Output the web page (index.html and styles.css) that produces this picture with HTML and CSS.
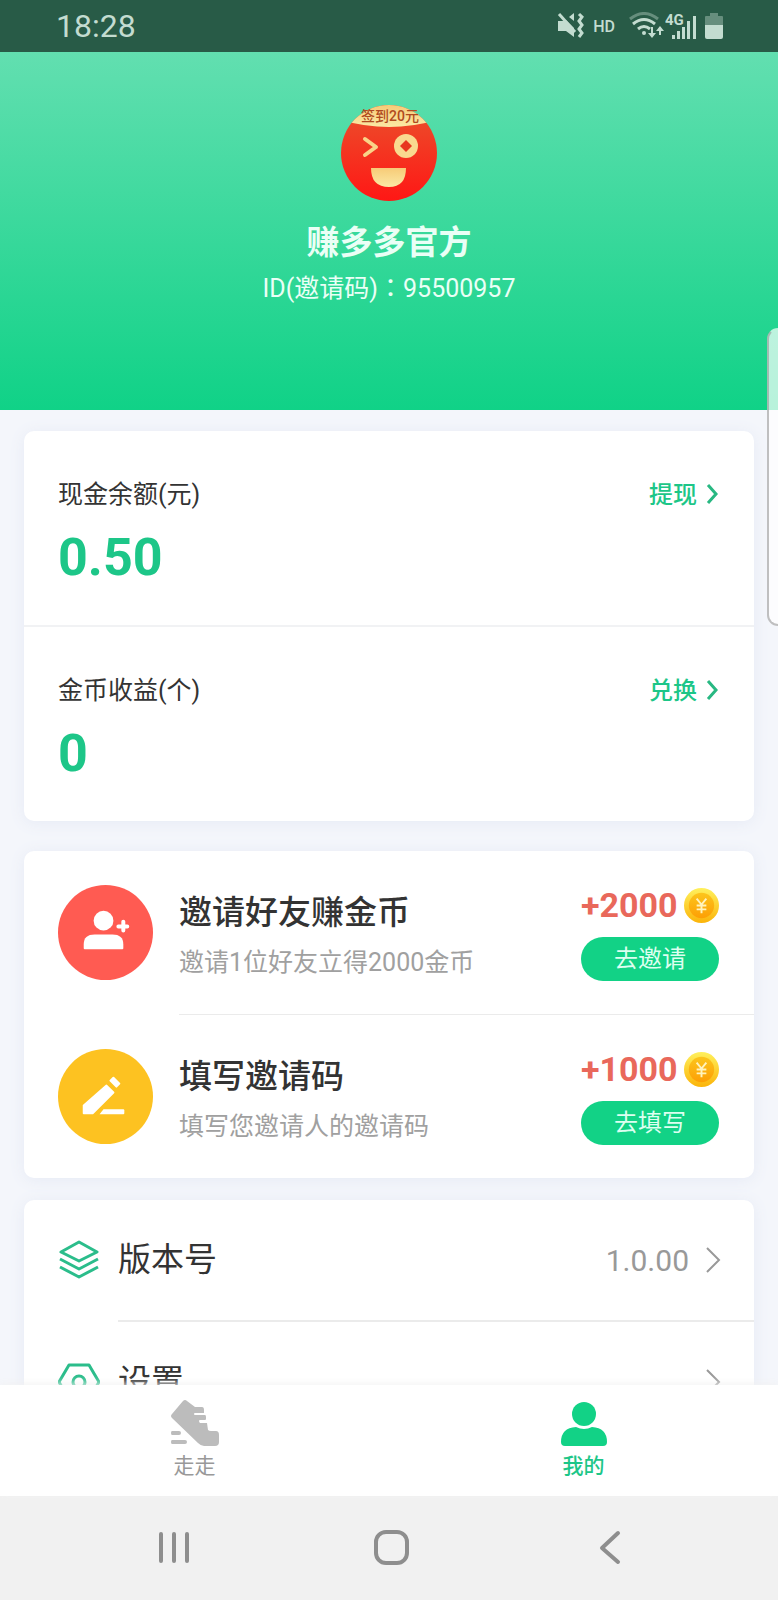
FILE: index.html
```html
<!DOCTYPE html>
<html lang="zh-CN">
<head>
<meta charset="utf-8">
<meta name="viewport" content="width=device-width, initial-scale=1">
<title>我的</title>
<link rel="stylesheet" href="styles.css">
</head>
<body>
<div class="screen">
  <div class="status">
    <span class="status-time">18:28</span>
    <div class="status-icons">
      <svg class="ic-mute" width="28" height="28" viewBox="0 0 28 28" fill="none" stroke="currentColor">
        <path d="M1 9h5l3-1 8 8v9l-8-6H1z" fill="currentColor" stroke="none"/>
        <path d="M12 5l5-4v8z" fill="currentColor" stroke="none"/>
        <path d="M2 2l16 18" stroke-width="3"/>
        <path d="M22 2l3 3-3 4 3 4-3 4 3 4-3 4" stroke-width="3"/>
      </svg>
      <span class="status-hd">HD</span>
      <svg class="ic-wifi" width="36" height="28" viewBox="0 0 36 28" fill="none" stroke="currentColor" stroke-width="3">
        <path d="M1 7q14-11 28 0" opacity=".4"/>
        <path d="M4 12q11-9 22 0M9 17q6-5 12 0"/>
        <circle cx="15" cy="21" r="2" fill="currentColor" stroke="none"/>
        <path d="M23 15v9M31 23v-8" stroke-width="2"/>
        <path d="M19 21h8l-4 5zM27 19h8l-4-5z" fill="currentColor" stroke="none"/>
      </svg>
      <svg class="ic-signal" width="32" height="28" viewBox="0 0 32 28" fill="currentColor">
        <text class="net" x="0" y="13">4G</text>
        <path d="M7 23h3v4H7zM12 19h3v8h-3zM17 15h3v12h-3zM22 9h3v18h-3zM28 4h3v23h-3z"/>
      </svg>
      <svg class="ic-battery" width="18" height="28" viewBox="0 0 18 28" fill="currentColor">
        <path d="M5 1h8v3h4q1 0 1 1v8H0V5q0-1 1-1h4z" opacity=".4"/>
        <path d="M0 13h18v12q0 2-2 2H2q-2 0-2-2z"/>
      </svg>
    </div>
  </div>

  <main class="content">
    <header class="profile">
      <svg class="avatar" viewBox="0 0 96 96" role="img" aria-label="签到20元">
        <defs>
          <linearGradient id="face" x2="0" y2="1"><stop offset="0" stop-color="#ea512c"/><stop offset="1" stop-color="#ff1715"/></linearGradient>
          <linearGradient id="gold" x2="0" y2="1"><stop offset="0" stop-color="#f7cb77"/><stop offset="1" stop-color="#fbe9a5"/></linearGradient>
          <clipPath id="round"><circle cx="48" cy="48" r="48"/></clipPath>
        </defs>
        <circle cx="48" cy="48" r="48" fill="url(#face)"/>
        <path d="M0 0h96v15q-48 14-96 0z" fill="url(#gold)" clip-path="url(#round)"/>
        <text class="avatar-text" x="49" y="16" text-anchor="middle">签到20元</text>
        <path d="M24 34l11 8-11 8" fill="none" stroke="#f9d488" stroke-width="4" stroke-linecap="round" stroke-linejoin="round"/>
        <circle cx="65" cy="41" r="12" fill="#f9d98f"/>
        <path d="M65 35l6 6-6 6-6-6z" fill="#e8371f"/>
        <path d="M30 63h35q0 19-17 19-18 0-18-19z" fill="url(#gold)"/>
      </svg>
      <h1 class="name">赚多多官方</h1>
      <p class="uid">ID(邀请码)<span class="colon" lang="zh-TW">：</span>95500957</p>
    </header>

    <section class="card wallet">
      <div class="balance">
        <div>
          <h2 class="label">现金余额(元)</h2>
          <p class="amount">0.50</p>
        </div>
        <a class="more" href="#withdraw">提现<svg width="14" height="24" viewBox="0 0 14 24"><path d="M3 2l8 9-8 9"/></svg></a>
      </div>
      <div class="balance">
        <div>
          <h2 class="label">金币收益(个)</h2>
          <p class="amount">0</p>
        </div>
        <a class="more" href="#exchange">兑换<svg width="14" height="24" viewBox="0 0 14 24"><path d="M3 2l8 9-8 9"/></svg></a>
      </div>
    </section>

    <section class="card tasks">
      <div class="task">
        <svg class="task-icon" viewBox="0 0 96 96">
          <circle cx="48" cy="48" r="48" fill="#ff5b52"/>
          <g fill="#fff"><circle cx="46" cy="36" r="10"/><path d="M26 64V60q0-10 11-10h18q11 0 11 10v4q0 1-1 1H27q-1 0-1-1z"/></g>
          <path d="M66 37v9M61 42h9" stroke="#fff" stroke-width="4" stroke-linecap="round"/>
        </svg>
        <div class="task-body">
          <div class="task-text">
            <h2 class="task-title">邀请好友赚金币</h2>
            <p class="task-note">邀请1位好友立得2000金币</p>
          </div>
          <div class="task-side">
            <p class="reward">+2000
              <svg class="coin" viewBox="0 0 36 36">
                <defs>
                  <linearGradient id="rim" x2="0" y2="1"><stop offset="0" stop-color="#fff05c"/><stop offset="1" stop-color="#fbb40a"/></linearGradient>
                  <linearGradient id="core" x2="0" y2="1"><stop offset="0" stop-color="#fcc51c"/><stop offset="1" stop-color="#fd9f05"/></linearGradient>
                </defs>
                <circle cx="18" cy="18" r="18" fill="url(#rim)"/><circle cx="18" cy="18" r="13" fill="url(#core)"/>
                <path d="M13 11l5 6 5-6M18 17v9M13 18h10M13 22h10" fill="none" stroke="#fff3bd" stroke-width="2"/>
              </svg>
            </p>
            <button class="go" type="button">去邀请</button>
          </div>
        </div>
      </div>
      <div class="task">
        <svg class="task-icon" viewBox="0 0 96 96">
          <circle cx="48" cy="48" r="48" fill="#fdc221"/>
          <path d="M49 37l7 7-21 21h-9v-8zM56 29l6 6-3 3-6-6z" fill="#fff" stroke="#fff" stroke-width="2" stroke-linejoin="round"/>
          <path d="M46 61h20q1 0 1 1v3q0 1-1 1H42z" fill="#fff"/>
        </svg>
        <div class="task-body">
          <div class="task-text">
            <h2 class="task-title">填写邀请码</h2>
            <p class="task-note">填写您邀请人的邀请码</p>
          </div>
          <div class="task-side">
            <p class="reward">+1000
              <svg class="coin" viewBox="0 0 36 36">
                <circle cx="18" cy="18" r="18" fill="url(#rim)"/><circle cx="18" cy="18" r="13" fill="url(#core)"/>
                <path d="M13 11l5 6 5-6M18 17v9M13 18h10M13 22h10" fill="none" stroke="#fff3bd" stroke-width="2"/>
              </svg>
            </p>
            <button class="go" type="button">去填写</button>
          </div>
        </div>
      </div>
    </section>

    <nav class="card menu">
      <a class="item" href="#version">
        <svg class="item-icon" viewBox="0 0 42 42"><path d="M21 3l18 10-18 9L3 13zM2 20l19 10 19-10M2 28l19 10 19-10"/></svg>
        <span class="item-body"><span class="item-name">版本号</span><span class="item-value">1.0.00</span><svg class="item-arrow" width="16" height="28" viewBox="0 0 16 28"><path d="M2 2l12 12L2 26"/></svg></span>
      </a>
      <a class="item" href="#settings">
        <svg class="item-icon" viewBox="0 0 42 42"><path d="M11 5h20l10 17-10 17H11L1 22z"/><circle cx="21" cy="22" r="6"/></svg>
        <span class="item-body"><span class="item-name">设置</span><svg class="item-arrow" width="16" height="28" viewBox="0 0 16 28"><path d="M2 2l12 12L2 26"/></svg></span>
      </a>
    </nav>
  </main>

  <nav class="tabs">
    <a class="tab" href="#walk">
      <svg width="50" height="48" viewBox="0 0 50 48" fill="currentColor">
        <path d="M13 2q2-2 4 0l8 6h7q2 0 2 3v3h-9q-1 0-1 1t1 1h10q1 0 1 2v2q0 1-1 1h-5q-1 0-1 1t1 2h7l1 7q1 1 3 1h5q3 0 3 4v7q0 4-4 4H34q-3 0-6-3L2 19q-2-2 0-4z"/>
        <path d="M2 32h7q2 0 2 2t-2 2H2q-1 0-1-2t1-2zM2 41h13q2 0 2 2t-2 2H2q-1 0-1-2t1-2z"/>
      </svg>
      <span>走走</span>
    </a>
    <a class="tab tab-active" href="#me" aria-current="page">
      <svg width="50" height="48" viewBox="0 0 50 48" fill="currentColor">
        <circle cx="25" cy="15" r="12"/>
        <path d="M17 28q8 4 16 0 15 1 15 15 0 4-4 4H6q-4 0-4-4 0-14 15-15z"/>
      </svg>
      <span>我的</span>
    </a>
  </nav>

  <div class="sysnav">
    <button class="key" type="button" aria-label="最近任务"><svg width="36" height="36" viewBox="0 0 36 36"><path d="M5 4v27M18 4v27M31 4v27"/></svg></button>
    <button class="key" type="button" aria-label="主屏幕"><svg width="36" height="36" viewBox="0 0 36 36"><rect x="2" y="2" width="31" height="31" rx="10"/></svg></button>
    <button class="key" type="button" aria-label="返回"><svg width="36" height="36" viewBox="0 0 36 36"><path d="M26 3L10 18l16 14"/></svg></button>
  </div>

  <div class="edge-panel"></div>
</div>
</body>
</html>
```
FILE: styles.css
```css
* {
  box-sizing: border-box;
}

body,
h1,
h2,
p {
  margin: 0;
}

body {
  font-family: Roboto, "Noto Sans CJK SC", sans-serif;
  color: #333;
  background: #f4f6fb;
}

a {
  color: inherit;
  text-decoration: none;
}

svg {
  display: block;
  flex: none;
}

.screen {
  position: relative;
  display: flex;
  flex-direction: column;
  height: 100vh;
  overflow: hidden;
}

/* Status bar */
.status {
  flex: none;
  display: flex;
  align-items: center;
  justify-content: space-between;
  height: 52px;
  padding: 0 55px 0 56px;
  background: #285b47;
  color: #c3dcd0;
}

.status-time {
  font-size: 32px;
  line-height: 52px;
}

.status-icons {
  display: flex;
  align-items: center;
}

.status-hd {
  margin: 0 14px 0 8px;
  font-size: 16px;
  font-weight: 500;
}

.ic-signal {
  margin-right: 8px;
}

.net {
  font-size: 15px;
  font-weight: 700;
}

.content {
  flex: 1;
  min-height: 0;
  overflow: hidden;
}

.profile {
  display: flex;
  flex-direction: column;
  align-items: center;
  padding: 53px 24px 102px;
  background: linear-gradient(#62dfb0, #10d287);
  color: #eafff6;
}

.avatar {
  width: 96px;
  height: 96px;
}

.avatar-text {
  font-size: 14px;
  font-weight: 500;
  fill: #b04a20;
}

.name {
  margin-top: 18px;
  font-size: 33px;
  font-weight: 700;
  line-height: 48px;
}

.uid {
  margin-top: 3px;
  font-size: 25px;
  line-height: 38px;
}

.colon {
  font-family: "Noto Sans CJK TC", sans-serif;
  line-height: 1;
}

.card {
  margin: 0 24px 30px;
  border-radius: 10px;
  background: #fff;
  box-shadow: 0 2px 16px #e6eaf5;
}

.wallet {
  margin-top: 21px;
}

.balance {
  display: flex;
  justify-content: space-between;
  align-items: flex-start;
  padding: 46px 35px 37px 34px;
}

.balance + .balance {
  border-top: 2px solid #f1f2f4;
}

.label {
  font-size: 25px;
  font-weight: 400;
  line-height: 36px;
}

.amount {
  margin-top: 15px;
  font-size: 52px;
  font-weight: 700;
  line-height: 60px;
  color: #1dc688;
}

.more {
  display: flex;
  align-items: center;
  gap: 8px;
  font-size: 24px;
  font-weight: 500;
  line-height: 36px;
  color: #1dc688;
}

.more path {
  fill: none;
  stroke: #28b882;
  stroke-width: 3;
}

/* Invite tasks */
.tasks {
  margin-bottom: 22px;
}

.task {
  display: flex;
  align-items: center;
  gap: 26px;
  padding-left: 34px;
}

.task-icon {
  width: 95px;
  height: 95px;
}

.task-body {
  flex: 1;
  display: flex;
  align-items: center;
  justify-content: space-between;
  padding: 34px 35px 33px 0;
}

.task + .task .task-body {
  border-top: 1px solid #ebebeb;
}

.task-text {
  padding-top: 4px;
}

.task-title {
  font-size: 33px;
  font-weight: 500;
  line-height: 48px;
}

.task-note {
  margin-top: 8px;
  font-size: 25px;
  line-height: 36px;
  color: #a0a0a0;
}

.task-side {
  display: flex;
  flex-direction: column;
  gap: 12px;
  width: 138px;
}

.reward {
  display: flex;
  align-items: center;
  justify-content: space-between;
  font-size: 34px;
  font-weight: 700;
  line-height: 40px;
  color: #e9685b;
}

.coin {
  width: 35px;
  height: 35px;
}

.go {
  height: 44px;
  padding: 0;
  border: 0;
  border-radius: 22px;
  background: #12d286;
  color: #dcfff0;
  font-family: inherit;
  font-size: 24px;
  line-height: 44px;
}

/* Menu */
.item {
  display: flex;
  align-items: center;
  gap: 18px;
  padding-left: 34px;
}

.item-icon {
  width: 42px;
  height: 42px;
  fill: none;
  stroke: #2bbd8b;
  stroke-width: 3;
  stroke-linejoin: round;
}

.item-body {
  flex: 1;
  display: flex;
  align-items: center;
  padding: 36px 33px 36px 0;
}

.item + .item .item-body {
  border-top: 2px solid #ebebeb;
}

.item-name {
  flex: 1;
  font-size: 33px;
  line-height: 48px;
}

.item-value {
  margin-right: 16px;
  font-size: 30px;
  color: #999;
}

.item-arrow {
  fill: none;
  stroke: #999;
  stroke-width: 2;
}

/* Bottom tabs */
.tabs {
  flex: none;
  display: flex;
  background: #fff;
  box-shadow: 0 -1px 8px #f2f2f2;
  position: relative;
}

.tab {
  flex: 1;
  display: flex;
  flex-direction: column;
  align-items: center;
  gap: 4px;
  padding: 14px 0 15px;
  font-size: 21px;
  line-height: 30px;
  color: #999;
}

.tab svg {
  color: #bcbcbc;
}

.tab-active {
  font-weight: 500;
  color: #1dc688;
}

.tab-active svg {
  color: #12d286;
}

/* System navigation keys */
.sysnav {
  flex: none;
  display: grid;
  grid-template-columns: repeat(3, 1fr);
  height: 104px;
  padding: 0 59px 0 65px;
  background: #f1f1f1;
}

.key {
  display: flex;
  align-items: center;
  justify-content: center;
  padding: 0;
  border: 0;
  background: none;
}

.key svg {
  fill: none;
  stroke: #8e8e8e;
  stroke-width: 4;
  stroke-linecap: round;
  stroke-linejoin: round;
}

/* Edge handle floating over the page */
.edge-panel {
  position: absolute;
  top: 328px;
  right: 0;
  width: 11px;
  height: 298px;
  border: 2px solid rgba(150, 150, 150, 0.6);
  border-right: 0;
  border-top-color: transparent;
  border-radius: 11px 0 0 11px;
  background: rgba(255, 255, 255, 0.7);
}
```
